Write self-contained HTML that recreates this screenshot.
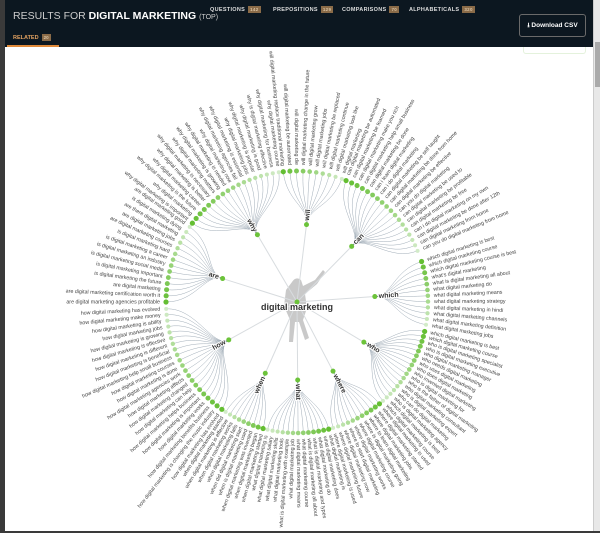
<!DOCTYPE html>
<html><head><meta charset="utf-8"><style>
*{margin:0;padding:0;box-sizing:border-box}
body{width:600px;height:533px;background:#fff;position:relative;overflow:hidden;font-family:"Liberation Sans",sans-serif}
#frame{position:absolute;left:0;top:0;width:600px;height:533px;border-left:5px solid #3a3a3a;border-bottom:2px solid #3a3a3a}
#hdr{position:absolute;left:5px;top:0;width:588px;height:47px;background:#0c1720}
#sb{position:absolute;left:593px;top:0;width:7px;height:531px;background:#e8e8e8;border-left:1px solid #ccc}
#sb div{position:absolute;left:1px;top:42px;width:5px;height:45px;background:#aaa}
.t{position:absolute;color:#fff;white-space:nowrap}
.tab{position:absolute;top:6px;font-size:5.5px;font-weight:bold;color:#ddd;letter-spacing:.3px}
.tab span,.rel span{display:inline-block;background:#8a6b48;color:#d9c3a5;font-size:4.5px;padding:1px 2px;margin-left:3px}
.rel{position:absolute;left:13px;top:34px;font-size:5.5px;font-weight:bold;color:#e0a060}
#btn{position:absolute;left:519px;top:14px;width:67px;height:23px;border:1px solid #6a6a6a;border-radius:3px;color:#fff;font-size:6.5px;font-weight:bold;line-height:21px;text-align:center}
</style></head><body>
<div id="frame"></div>
<div id="hdr">
<div class="t" style="left:8px;top:10px;font-size:10.5px;color:#ccc">RESULTS FOR <b style="color:#fff">DIGITAL MARKETING</b> <span style="font-size:7px">(TOP)</span></div>
<div class="tab" style="left:205px">QUESTIONS<span>142</span></div>
<div class="tab" style="left:268px">PREPOSITIONS<span>129</span></div>
<div class="tab" style="left:337px">COMPARISONS<span>70</span></div>
<div class="tab" style="left:404px">ALPHABETICALS<span>320</span></div>
<div class="rel" style="left:8px">RELATED<span>20</span></div>
<div style="position:absolute;left:2px;top:45px;width:52px;height:2px;background:#e08a3a"></div>
</div>
<div id="btn">⭳ Download CSV</div>
<div id="sb"><div></div></div>
<div style="position:absolute;left:523px;top:47px;width:63px;height:7px;border:1px solid #e4f2dc;border-top:none;border-radius:0 0 3px 3px"></div>
<svg id="s" width="600" height="533" style="position:absolute;left:0;top:0" xmlns="http://www.w3.org/2000/svg"></svg>
<script>
var s=document.getElementById('s'),NS='http://www.w3.org/2000/svg';
var cx=297,cy=302,R=131;
function el(n,a,t){var e=document.createElementNS(NS,n);for(var k in a)e.setAttribute(k,a[k]);if(t)e.textContent=t;s.appendChild(e);return e}
el('path',{d:'M292 282 q4 -6 9 -2 l2 6 l12 -6 l8 -10 l2 2 l-8 12 l-12 10 l2 14 l-4 12 l6 18 l-4 2 l-6 -18 l-4 0 l-2 20 l-4 0 l1 -22 l-6 -14 l2 -16 z',fill:'#c9c9c9'});
var groups=[
['which',-18,10,12,'which digital marketing is best|which digital marketing course|which digital marketing course is best|what\'s digital marketing|what is digital marketing all about|what digital marketing do|what digital marketing means|what digital marketing strategy|what digital marketing in hindi|what digital marketing channels|what digital marketing definition|what digital marketing jobs|which type of digital marketing'],
['who',13,49,17,'which digital marketing is best|which digital marketing course|who is digital marketing specialist|who is digital marketing executive|who digital marketing manager|who needs digital marketing|who uses digital marketing|who does digital marketing|who invented digital marketing|who is digital marketing for|who is the father of digital marketing|who digital marketing consultant|who is digital marketing expert|who can do digital marketing|who is digital marketing agency'],
['where',51,74,11,'where digital marketing is used|where digital marketing started|where digital marketing jobs|where to learn digital marketing|where is digital marketing going|where digital marketing course|where digital marketing works|where to start digital marketing|where digital marketing now|where digital marketing future'],
['what',76,103,13,'what digital marketing is|what digital marketing does|what digital marketing do|what is digital marketing and types|what is digital marketing all about|what digital marketing course|what digital marketing means|what digital marketing job|what is digital marketing with example|what digital marketing tools|what digital marketing skills|what digital marketing salary'],
['when',105,123,9,'when digital marketing started|when digital marketing began|when digital marketing was invented|when is digital marketing used|when did digital marketing start|when digital marketing fails|when digital marketing works|when digital marketing is effective'],
['how',125,177,21,'how digital marketing has evolved|how digital marketing is changing the music industry|how digital marketing benefits business|how digital marketing works|how digital marketing is important|how digital marketing helps business|how digital marketing can help|how digital marketing changed|how digital marketing affects|how digital marketing agencies work|how digital marketing is done|how digital marketing courses|how digital marketing help small business|how digital marketing is beneficial|how digital marketing is different|how digital marketing is effective|how digital marketing is growing|how digital marketing jobs|how digital marketing is ability|how digital marketing make money'],
['are',180,215,14,'are digital marketing agencies profitable|are digital marketing certification worth it|are digital marketing|is digital marketing the future|is digital marketing important|is digital marketing social media|is digital marketing an industry|is digital marketing a career|is digital marketing hard|are digital marketing courses|are digital marketing jobs|are there digital marketing|is digital marketing dying|are digital marketing good'],
['why',217,262,18,'why digital marketing is important|why digital marketing|why digital marketing is the future|why digital marketing career|why digital marketing is better|why digital marketing is necessary|why digital marketing matters|why digital marketing is growing|why digital marketing is needed|why digital marketing now|why digital marketing agencies fail|why digital marketing is essential|why digital marketing jobs|why digital marketing is popular|why digital marketing is good|why is digital marketing effective|why digital marketing for business|why digital marketing course'],
['will',264,290,10,'will digital marketing replace traditional marketing|will digital marketing be automated|will digital marketing die|will digital marketing change in the future|will digital marketing grow|will digital marketing jobs|will digital marketing be replaced|will digital marketing continue|will digital marketing look like|will digital marketing'],
['can',292,337,18,'can digital marketing be automated|can digital marketing be learned|can digital marketing make you rich|can digital marketing help small business|can digital marketing be done|can i learn digital marketing|can i do digital marketing|can digital marketing be self taught|can digital marketing be done from home|can digital marketing be effective|can you do digital marketing|can digital marketing be used to|can digital marketing be profitable|can digital marketing be free|can i do digital marketing on my own|can digital marketing be done after 12th|can digital marketing from home|can you do digital marketing from home']
];
var dots=[],txt=[];
groups.forEach(function(g){
 var name=g[0],a0=g[1],a1=g[2],n=g[3],labels=g[4].split('|');
 var am=(a0+a1)/2*Math.PI/180, rb=78;
 var bx=cx+rb*Math.cos(am),by=cy+rb*Math.sin(am);
 el('line',{x1:cx,y1:cy,x2:bx,y2:by,stroke:'#d8dcdf','stroke-width':1});
 for(var i=0;i<n;i++){
  var ad=a0+(a1-a0)*i/(n-1),a=ad*Math.PI/180,c=Math.cos(a),sn=Math.sin(a);
  var lx=cx+R*c,ly=cy+R*sn;
  var c1x=cx+(rb+18)*Math.cos(am),c1y=cy+(rb+18)*Math.sin(am);
  var c2x=cx+(R-30)*c,c2y=cy+(R-30)*sn;
  el('path',{d:'M'+bx.toFixed(1)+' '+by.toFixed(1)+'C'+c1x.toFixed(1)+' '+c1y.toFixed(1)+' '+c2x.toFixed(1)+' '+c2y.toFixed(1)+' '+lx.toFixed(1)+' '+ly.toFixed(1),fill:'none',stroke:'#7a8b9a','stroke-width':0.45,'stroke-opacity':0.8});
  var f=i/(n-1);var gcol='rgb('+Math.round(100+110*f)+','+Math.round(190+45*f)+','+Math.round(50+150*f)+')';
  dots.push([lx,ly,gcol,2.6-0.6*f]);
  var t=labels[i%labels.length],tx=cx+(R+6)*c,ty=cy+(R+6)*sn;
  var flip=(ad>90&&ad<270);
  txt.push([tx,ty,flip?ad+180:ad,flip?'end':'start',t]);
 }
 var deg=(a0+a1)/2, fl=(deg>90&&deg<270);
 el('circle',{cx:bx,cy:by,r:2.5,fill:'#6cc33a'});
 var lbx=cx+(rb+4)*Math.cos(am),lby=cy+(rb+4)*Math.sin(am);
 el('text',{x:lbx,y:lby,'font-size':7,'font-weight':'bold',fill:'#333','text-anchor':fl?'end':'start','dominant-baseline':'middle',transform:'rotate('+(fl?deg+180:deg)+' '+lbx+' '+lby+')',stroke:'#fff','stroke-width':2,'paint-order':'stroke'},name);
});
dots.forEach(function(d){el('circle',{cx:d[0],cy:d[1],r:d[3],fill:d[2]})});
txt.forEach(function(t){el('text',{x:t[0],y:t[1],'font-size':5.3,fill:'#444','text-anchor':t[3],'dominant-baseline':'middle',transform:'rotate('+t[2].toFixed(1)+' '+t[0].toFixed(1)+' '+t[1].toFixed(1)+')'},t[4])});
el('circle',{cx:cx,cy:cy,r:2.5,fill:'#6cc33a'});
el('text',{x:cx,y:cy+8,'font-size':9,'font-weight':'bold',fill:'#333','text-anchor':'middle',stroke:'#fff','stroke-width':2,'paint-order':'stroke'},'digital marketing');
</script>
</body></html>
